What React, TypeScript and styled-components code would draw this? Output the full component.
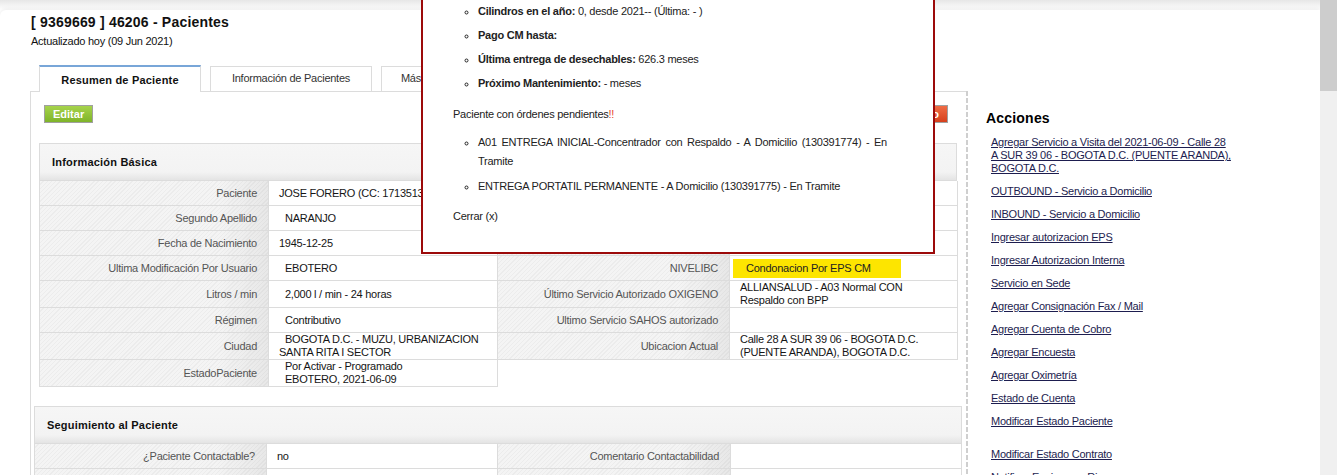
import React from 'react';
import styled, { createGlobalStyle } from 'styled-components';

const GlobalStyle = createGlobalStyle`
    html, body {
        margin: 0;
        padding: 0;
        overflow: hidden;
        background: #fff;
    }
    body {
        font-family: "Liberation Sans", Arial, sans-serif;
        font-size: 11px;
        letter-spacing: -0.25px;
        color: #222;
    }
`;

const Screen = styled.div`
    position: relative;
    display: flex;
    height: 475px;
    overflow: hidden;
`;

const Page = styled.div`
    flex: 1;
    min-width: 0;
    padding-top: 10px;
    background: linear-gradient(#e6e6e6, #fff 10px) no-repeat;
`;

const Sheet = styled.div`
    height: 100%;
    background: #fff;
    border-radius: 6px 0 0 0;
    box-shadow: 0 -1px 4px rgba(0, 0, 0, 0.08);
`;

const Scrollbar = styled.div`
    width: 17px;
    flex: none;
    background: #f0f0f0;
`;

const Thumb = styled.div`
    height: 91px;
    background: #cdcdcd;
`;

const PageHeader = styled.header`
    padding: 4px 0 0 31px;
`;

const Title = styled.h1`
    margin: 0;
    font-size: 14px;
    line-height: 16px;
    font-weight: bold;
    letter-spacing: 0.2px;
    color: #111;
`;

const Updated = styled.div`
    margin-top: 5px;
    line-height: 13px;
    color: #111;
`;

const Layout = styled.div`
    display: flex;
    margin-top: 17px;
    height: 100%;
`;

const MainColumn = styled.div`
    width: 936px;
    margin-left: 30px;
    flex: none;
`;

const Tabs = styled.div`
    position: relative;
    z-index: 1;
    display: flex;
    align-items: flex-end;
    gap: 9px;
    height: 26px;
    padding-left: 9px;
`;

const Tab = styled.div<{ $active?: boolean }>`
    display: flex;
    align-items: center;
    justify-content: center;
    width: 162px;
    box-sizing: border-box;
    background: #fff;
    border: 1px solid #dcdcdc;
    border-bottom: none;
    color: ${(p) => (p.$active ? '#111' : '#333')};
    font-weight: ${(p) => (p.$active ? 'bold' : 'normal')};
    letter-spacing: ${(p) => (p.$active ? '0.2px' : '-0.25px')};
    height: ${(p) => (p.$active ? '27px' : '25px')};
    margin-bottom: ${(p) => (p.$active ? '-1px' : '0')};
    border-top: ${(p) => (p.$active ? '2px solid #78a6d8' : '1px solid #dcdcdc')};
    padding-bottom: ${(p) => (p.$active ? '0' : '2px')};
`;

const Panel = styled.div`
    border-top: 1px solid #dcdcdc;
    border-left: 1px solid #dcdcdc;
    height: 100%;
`;

const Toolbar = styled.div`
    display: flex;
    justify-content: space-between;
    margin: 13px 18px 0 13px;
`;

const Button = styled.button<{ $tone: 'green' | 'red' }>`
    height: 18px;
    padding: 0 8px;
    border: 1px solid #a0a0a0;
    font-family: inherit;
    font-size: 11px;
    font-weight: bold;
    letter-spacing: 0;
    color: #fff;
    background: ${(p) =>
        p.$tone === 'green'
            ? 'linear-gradient(#a6d34b, #7fb42a)'
            : 'linear-gradient(#ef6c45, #d6401d)'};
    cursor: pointer;
`;

const Section = styled.section<{ $margin: string }>`
    margin: ${(p) => p.$margin};
`;

const SectionHeader = styled.div`
    display: flex;
    align-items: center;
    height: 36px;
    padding-left: 12px;
    border: 1px solid #dcdcdc;
    background: linear-gradient(#f6f6f6 0, #f3f3f3 78%, #e4e4e4 100%);
    font-weight: bold;
    letter-spacing: 0.2px;
    color: #111;
`;

const Grid = styled.div<{ $cols: string }>`
    display: grid;
    grid-template-columns: ${(p) => p.$cols};
    width: max-content;
    border-left: 1px solid #dcdcdc;
`;

const LabelCell = styled.div`
    display: flex;
    align-items: center;
    justify-content: flex-end;
    min-height: 24px;
    padding: 0 11px 0 6px;
    line-height: 13px;
    text-align: right;
    color: #555;
    border-right: 1px solid #dcdcdc;
    border-bottom: 1px solid #dcdcdc;
    background:
        linear-gradient(to right, rgba(255, 255, 255, 0) 78%, rgba(0, 0, 0, 0.05)),
        repeating-linear-gradient(135deg, #f4f4f4 0 2px, #ececec 2px 3px);
`;

const ValueCell = styled.div<{ $indent?: number; $hang?: number }>`
    display: flex;
    align-items: center;
    min-height: 24px;
    padding: 0 6px 0 ${(p) => p.$indent ?? 10}px;
    text-indent: ${(p) => p.$hang ?? 0}px;
    line-height: 13px;
    color: #151515;
    border-right: 1px solid #dcdcdc;
    border-bottom: 1px solid #dcdcdc;
    background: #fff;
`;

const Highlight = styled.span`
    display: inline-block;
    width: 168px;
    height: 19px;
    line-height: 19px;
    margin-left: -7px;
    padding-left: 13px;
    box-sizing: border-box;
    background: #fde500;
    color: #222;
`;

const Sidebar = styled.aside`
    flex: 1;
    margin-top: 26px;
    padding: 19px 0 0 20px;
    background: repeating-linear-gradient(#cfcfcf 0 5px, transparent 5px 7px) left top / 2px 100% no-repeat;
`;

const SidebarTitle = styled.h2`
    margin: 0;
    font-size: 14px;
    line-height: 16px;
    font-weight: bold;
    letter-spacing: 0.2px;
    color: #000;
`;

const ActionList = styled.ul`
    list-style: none;
    margin: 10px 0 0;
    padding: 0 0 0 5px;
    width: 260px;
`;

const ActionItem = styled.li<{ $spaced?: boolean }>`
    line-height: 13px;
    margin-bottom: 10px;
    margin-top: ${(p) => (p.$spaced ? '20px' : '0')};
`;

const ActionLink = styled.a`
    color: #1d1d4f;
    text-decoration: underline;
    cursor: pointer;
`;

const Popup = styled.div`
    position: absolute;
    left: 421px;
    top: -3px;
    z-index: 5;
    width: 514px;
    box-sizing: border-box;
    padding: 0 46px 27px 30px;
    border: 2px solid #9c0a0a;
    background: #fff;
    color: #222;
`;

const PopupList = styled.ul<{ $line: number; $top: number }>`
    list-style: circle;
    margin: ${(p) => p.$top}px 0 0;
    padding-left: 25px;
    text-align: justify;

    li {
        line-height: ${(p) => p.$line}px;
    }
`;

const OrderItem = styled.li`
    margin-bottom: 6px;
`;

const PopupText = styled.p<{ $top: number }>`
    margin: ${(p) => p.$top}px 0 0;
    line-height: 18px;
`;

const Alert = styled.span`
    color: #e8452c;
`;

type Row = {
    label: string;
    value?: React.ReactNode;
    indent?: number;
    hang?: number;
};

const basicRows: Row[][] = [
    [
        { label: 'Paciente', value: 'JOSE FORERO (CC: 17135137)' },
        { label: 'Documento', value: 'CC 17135137' },
    ],
    [
        { label: 'Segundo Apellido', value: 'NARANJO', indent: 16 },
        { label: 'Teléfono', value: '3102456789' },
    ],
    [
        { label: 'Fecha de Nacimiento', value: '1945-12-25' },
        { label: 'EPS', value: 'ALLIANSALUD' },
    ],
    [
        { label: 'Ultima Modificación Por Usuario', value: 'EBOTERO', indent: 16 },
        { label: 'NIVELIBC', value: <Highlight>Condonacion Por EPS CM</Highlight> },
    ],
    [
        { label: 'Litros / min', value: '2,000 l / min - 24 horas', indent: 16 },
        {
            label: 'Último Servicio Autorizado OXIGENO',
            value: (
                <>
                    ALLIANSALUD - A03 Normal CON
                    <br />
                    Respaldo con BPP
                </>
            ),
        },
    ],
    [
        { label: 'Régimen', value: 'Contributivo', indent: 16 },
        { label: 'Ultimo Servicio SAHOS autorizado', value: '' },
    ],
    [
        {
            label: 'Ciudad',
            hang: 6,
            value: (
                <div>
                    BOGOTA D.C. - MUZU, URBANIZACION
                    <br />
                    SANTA RITA I SECTOR
                </div>
            ),
        },
        {
            label: 'Ubicacion Actual',
            value: (
                <div>
                    Calle 28 A SUR 39 06 - BOGOTA D.C.
                    <br />
                    (PUENTE ARANDA), BOGOTA D.C.
                </div>
            ),
        },
    ],
    [
        {
            label: 'EstadoPaciente',
            indent: 16,
            value: (
                <div>
                    Por Activar - Programado
                    <br />
                    EBOTERO, 2021-06-09
                </div>
            ),
        },
    ],
];

const followRows: Row[][] = [
    [
        { label: '¿Paciente Contactable?', value: 'no' },
        { label: 'Comentario Contactabilidad', value: '' },
    ],
    [
        { label: 'Fecha Último Contacto', value: '' },
        { label: 'Usuario Contacto', value: '' },
    ],
];

const actions: { text: React.ReactNode; spaced?: boolean }[] = [
    {
        text: (
            <>
                Agregar Servicio a Visita del 2021-06-09 - Calle 28
                <br />A SUR 39 06 - BOGOTA D.C. (PUENTE ARANDA),
                <br />
                BOGOTA D.C.
            </>
        ),
    },
    { text: 'OUTBOUND - Servicio a Domicilio' },
    { text: 'INBOUND - Servicio a Domicilio' },
    { text: 'Ingresar autorizacion EPS' },
    { text: 'Ingresar Autorizacion Interna' },
    { text: 'Servicio en Sede' },
    { text: 'Agregar Consignación Fax / Mail' },
    { text: 'Agregar Cuenta de Cobro' },
    { text: 'Agregar Encuesta' },
    { text: 'Agregar Oximetría' },
    { text: 'Estado de Cuenta' },
    { text: 'Modificar Estado Paciente' },
    { text: 'Modificar Estado Contrato', spaced: true },
    { text: 'Notificar Equipos en Riesgo' },
];

const DataGrid = ({ rows, cols }: { rows: Row[][]; cols: string }) => (
    <Grid $cols={cols}>
        {rows.map((row, i) =>
            row.map((cell, j) => (
                <React.Fragment key={`${i}-${j}`}>
                    <LabelCell>{cell.label}</LabelCell>
                    <ValueCell $indent={cell.indent} $hang={cell.hang}>
                        {cell.value}
                    </ValueCell>
                </React.Fragment>
            )),
        )}
    </Grid>
);

const PendingPopup = () => (
    <Popup>
        <PopupList $line={24} $top={0}>
            <li>
                <b>Cilindros en el año:</b> 0, desde 2021-- (Última: - )
            </li>
            <li>
                <b>Pago CM hasta:</b>
            </li>
            <li>
                <b>Última entrega de desechables:</b> 626.3 meses
            </li>
            <li>
                <b>Próximo Mantenimiento:</b> - meses
            </li>
        </PopupList>
        <PopupText $top={10}>
            Paciente con órdenes pendientes<Alert>!!</Alert>
        </PopupText>
        <PopupList $line={19} $top={10}>
            <OrderItem>
                A01 ENTREGA INICIAL-Concentrador con Respaldo - A Domicilio (130391774) - En
                Tramite
            </OrderItem>
            <OrderItem>ENTREGA PORTATIL PERMANENTE - A Domicilio (130391775) - En Tramite</OrderItem>
        </PopupList>
        <PopupText $top={11}>Cerrar (x)</PopupText>
    </Popup>
);

export default function App() {
    return (
        <Screen>
            <GlobalStyle />
            <Page>
                <Sheet>
                    <PageHeader>
                        <Title>[ 9369669 ] 46206 - Pacientes</Title>
                        <Updated>Actualizado hoy (09 Jun 2021)</Updated>
                    </PageHeader>
                    <Layout>
                        <MainColumn>
                            <Tabs>
                                <Tab $active>Resumen de Paciente</Tab>
                                <Tab>Información de Pacientes</Tab>
                                <Tab>Más Información Adicional</Tab>
                            </Tabs>
                            <Panel>
                                <Toolbar>
                                    <Button $tone="green">Editar</Button>
                                    <Button $tone="red">Inactivo</Button>
                                </Toolbar>
                                <Section $margin="20px 9px 0 8px">
                                    <SectionHeader>Información Básica</SectionHeader>
                                    <DataGrid rows={basicRows} cols="229px 229px 232px 228px" />
                                </Section>
                                <Section $margin="19px 4px 0 3px">
                                    <SectionHeader>Seguimiento al Paciente</SectionHeader>
                                    <DataGrid rows={followRows} cols="232px 231px 233px 231px" />
                                </Section>
                            </Panel>
                        </MainColumn>
                        <Sidebar>
                            <SidebarTitle>Acciones</SidebarTitle>
                            <ActionList>
                                {actions.map((a, i) => (
                                    <ActionItem key={i} $spaced={a.spaced}>
                                        <ActionLink>{a.text}</ActionLink>
                                    </ActionItem>
                                ))}
                            </ActionList>
                        </Sidebar>
                    </Layout>
                </Sheet>
            </Page>
            <Scrollbar>
                <Thumb />
            </Scrollbar>
            <PendingPopup />
        </Screen>
    );
}
